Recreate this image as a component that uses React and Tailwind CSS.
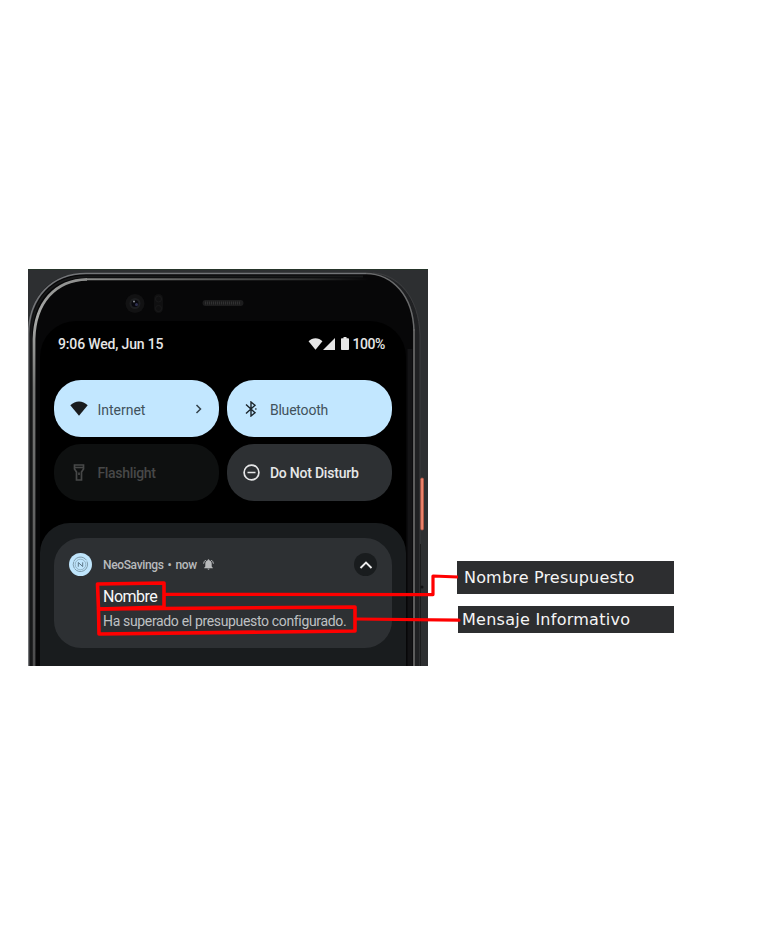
import React from "react";

function PhoneFrame() {
  return (
    <svg className="absolute inset-0" width="400" height="397" viewBox="0 0 400 397" fill="none">
      <defs>
        <linearGradient id="edge" x1="0" y1="0" x2="1" y2="0">
          <stop offset="0" stopColor="#8d8e8c" />
          <stop offset="0.4" stopColor="#595a59" />
          <stop offset="0.8" stopColor="#2c2d2d" />
          <stop offset="1" stopColor="#080809" />
        </linearGradient>
        <linearGradient id="leftEdge" x1="0" y1="0" x2="0" y2="397" gradientUnits="userSpaceOnUse">
          <stop offset="0" stopColor="#888988" />
          <stop offset="0.12" stopColor="#a8a9a7" />
          <stop offset="0.3" stopColor="#777877" />
          <stop offset="1" stopColor="#4c4c4d" />
        </linearGradient>
      </defs>
      <rect width="400" height="397" fill="#2d2f31" />
      <path d="M0 0.500H400" stroke="#26352a" strokeWidth="1" />
      <path d="M0 397V62C2 26 22 4 58 4H338C370 5 391 28 392 66V397Z" fill="#202123" />
      <path d="M2 397V65C3 28 24 5 60 5H338C366 5 385 27 386 62V397Z" fill="#070708" />
      <path d="M392 397V66C391 28 370 5 345 4" stroke="#3b3c3e" strokeWidth="1" />
      <path d="M0.500 397V65C1 28 24 4.500 58 4.500H338" stroke="#737578" strokeWidth="1.500" />
      <path d="M338 4.500C365 5 385 27 386 62" stroke="#696a6b" strokeWidth="1.500" />
      <path d="M3 397V67C4 30 25 7 60 7.500H335" stroke="#171819" strokeWidth="2" />
      <path d="M6 397V70C7 34 27 11 59 10.300" stroke="url(#leftEdge)" strokeWidth="2.800" />
      <path d="M58 9.200H340V11.200H58Z" fill="url(#edge)" />
      <path d="M386 60V397" stroke="#656565" strokeWidth="1.800" />
      <path d="M382 80V397" stroke="#131315" strokeWidth="5" />
      <rect x="392.700" y="209" width="2.800" height="52" rx="1.300" fill="#ec846d" stroke="#b75542" strokeWidth="0.700" />
      <circle cx="107" cy="34.500" r="9.500" fill="#121213" />
      <circle cx="107" cy="34.500" r="5.500" fill="#1d1e20" />
      <circle cx="107" cy="34.500" r="3.500" fill="#08080e" />
      <circle cx="106" cy="32.500" r="1" fill="#8b8f96" />
      <circle cx="108.500" cy="35.500" r="1.500" fill="#2f3152" />
      <rect x="126" y="25" width="9" height="19" rx="4.500" fill="#101011" />
      <circle cx="130.500" cy="30" r="3" stroke="#19191a" />
      <circle cx="130.500" cy="39.500" r="3" stroke="#19191a" />
      <rect x="174.500" y="31" width="41" height="6" rx="3" fill="#1c1c1d" />
      <path d="M177 34H213" stroke="#303031" strokeWidth="3" strokeDasharray="1 1" />
      <path d="M392.500 275V397" stroke="#1b1c1d" />
      <circle cx="394" cy="318" r="1.500" fill="#121214" />
    </svg>
  );
}

function WifiIcon({ className }) {
  return (
    <svg className={className} viewBox="0 0 18 15" fill="currentColor">
      <path d="M0.300 4.200C5.300-.9 12.700-.9 17.700 4.200L9 14.700Z" />
    </svg>
  );
}

function StatusBar() {
  return (
    <div className="flex h-[45px] items-center pl-[18px] pr-[21px] text-[14px] font-medium leading-none text-[#e6e6e6]">
      <span className="tracking-[-0.16px]">9:06 Wed, Jun 15</span>
      <WifiIcon className="ml-auto h-[12px] w-[15px]" />
      <svg className="h-[12px] w-[12px]" viewBox="0 0 12 12" fill="currentColor"><path d="M12 0V12H0Z" /></svg>
      <svg className="ml-[6px] h-[13px] w-[8px]" viewBox="0 0 8 13" fill="currentColor"><path d="M2.500 0H5.500V1.300H7.200Q8 1.300 8 2.100V12.200Q8 13 7.200 13H.8Q0 13 0 12.200V2.100Q0 1.300 .8 1.300H2.500Z" /></svg>
      <span className="ml-[3px] tracking-[-0.4px]">100%</span>
    </div>
  );
}

function Tile({ icon, label, tone, chevron }) {
  return (
    <div className={`flex h-[56.500px] items-center rounded-[27px] pl-[16px] pr-[16px] text-[14px] leading-none ${tone}`}>
      <span className="flex w-[18px] justify-center">{icon}</span>
      <span className="ml-[9px] pt-[2px]">{label}</span>
      {chevron && (
        <svg className="ml-auto h-[10px] w-[9px]" viewBox="0 0 9 10" fill="none" stroke="#334149" strokeWidth="1.500"><path d="M2.500 1L6.500 5L2.500 9" /></svg>
      )}
    </div>
  );
}

function QuickSettings() {
  return (
    <div className="ml-[14.400px] mt-[14.400px] grid grid-cols-[165px_165px] gap-x-[7.500px] gap-y-[7.200px]">
      <Tile tone="bg-[#c2e7ff] text-[#41525c] tracking-[0px]" label="Internet" chevron
        icon={<WifiIcon className="h-[15px] w-[18px] text-[#191c1e]" />} />
      <Tile tone="bg-[#c2e7ff] text-[#41525c] tracking-[-0.2px]" label="Bluetooth"
        icon={<svg className="mr-[2px] h-[16px] w-[12px]" viewBox="0 0 12 16" fill="none" stroke="#1b252b" strokeWidth="1.400"><path d="M1 3.500L10 11.700L6 15V1L10 4.300L1 12.500" /><path d="M10.200 8H11.500" /></svg>} />
      <Tile tone="bg-[#0e1010] text-[#474848] font-medium tracking-[-0.3px]" label="Flashlight"
        icon={<svg className="h-[17px] w-[12px]" viewBox="0 0 12 17" fill="none" stroke="#474848" strokeWidth="1.700"><path d="M1.500 1H10.500V5L8.500 8V16H3.500V8L1.500 5Z" /><path d="M1.500 3.500H10.500" /><path d="M6 8.500V11" /></svg>} />
      <Tile tone="bg-[#2d3033] text-[#e6e7e8] font-medium tracking-[-0.220px]" label="Do Not Disturb"
        icon={<svg className="mr-[1px] h-[17px] w-[17px]" viewBox="0 0 17 17" fill="none" stroke="currentColor" strokeWidth="1.700"><circle cx="8.500" cy="8.500" r="7.400" /><path d="M4.500 8.500H12.500" /></svg>} />
    </div>
  );
}

function AppLogo() {
  return (
    <svg className="h-[23px] w-[23px]" viewBox="0 0 23 23" fill="none">
      <circle cx="11.500" cy="11.500" r="11.500" fill="#bfe5fc" />
      <g stroke="#7793a3" strokeWidth="0.900">
        <path d="M5 8A7.300 7.300 0 0 1 17.500 7.300M18 8.500A7.200 7.200 0 0 1 5.500 15.500M4.800 8.500A7.200 7.200 0 0 0 5.200 15" />
        <circle cx="11.500" cy="11.500" r="5.300" strokeWidth="0.600" />
        <path d="M9.300 13.700V9.500L13.700 13.500V9.300" stroke="#526c7c" />
      </g>
    </svg>
  );
}

function RingingBell() {
  return (
    <svg className="h-[11px] w-[11px]" viewBox="0 0 11 11" fill="#b8babc">
      <path d="M5.500 .3C6 .3 6.300 .7 6.300 1.200C8 1.700 8.700 3 8.700 4.600V7.500L9.800 8.700V9.200H1.200V8.700L2.300 7.500V4.600C2.300 3 3 1.700 4.700 1.200C4.700 .7 5 .3 5.500 .3ZM4.400 9.800H6.600Q5.500 11.500 4.400 9.800Z" />
      <path d="M2.800 1Q.8 2.300 .6 4.700M8.200 1Q10.200 2.300 10.400 4.700" fill="none" stroke="#b8babc" strokeWidth="1" />
    </svg>
  );
}

function Notification() {
  return (
    <div className="mt-[22px] h-[144px] rounded-t-[30px] bg-[#191c1e] px-[14px] pt-[15.500px]">
      <div className="ml-[0.400px] h-[110px] rounded-[27px] bg-[#2d3033] pl-[14.600px] pr-[15px] pt-[15px]">
        <div className="flex h-[23px] items-center text-[12px] leading-none text-[#b8babc]">
          <AppLogo />
          <span className="ml-[11px] flex pt-[1px] font-medium tracking-[-0.350px]"><span>NeoSavings</span><span className="ml-[4px] mr-[4px]">•</span><span>now</span></span>
          <span className="ml-[6px]"><RingingBell /></span>
          <span className="ml-auto flex h-[23px] w-[23px] items-center justify-center rounded-full bg-[#191c1e]">
            <svg className="h-[8px] w-[14px]" viewBox="0 0 14 8" fill="none" stroke="#eeeeee" strokeWidth="1.900"><path d="M1.500 7L7 1.500L12.500 7" /></svg>
          </span>
        </div>
        <div className="ml-[34px] mt-[11.500px] text-[16px] leading-[18px] tracking-[-0.5px] text-[#f8f9fa]">Nombre</div>
        <div className="ml-[34px] mt-[6.500px] whitespace-nowrap text-[14px] leading-[18px] tracking-[-0.340px] text-[#bfc1c3]">Ha superado el presupuesto configurado.</div>
      </div>
    </div>
  );
}

function Phone() {
  return (
    <div className="relative h-[397px] w-[400px] overflow-hidden pl-[12px] pt-[52px]">
      <PhoneFrame />
      <div className="relative h-[345px] w-[366px] overflow-hidden rounded-t-[36px] bg-black">
        <StatusBar />
        <QuickSettings />
        <Notification />
      </div>
    </div>
  );
}

function Annotations() {
  return (
    <svg className="absolute left-0 top-0" width="780" height="928" viewBox="0 0 780 928" fill="none" stroke="#ff0000" strokeWidth="3.200" strokeLinecap="round" strokeLinejoin="round">
      <path d="M97.500 584L164 583V607L98.500 609Z" strokeWidth="3.600" />
      <path d="M98.500 609L355 607V631L99 634Z" strokeWidth="3.600" />
      <path d="M164 594.300L433 594.600V576L458 577" strokeLinecap="butt" />
      <path d="M356 619L459 620.200" />
    </svg>
  );
}

export default function App() {
  return (
    <main className="relative flex h-[928px] w-[780px] items-start bg-white pl-[28px] pt-[269px] font-['Roboto',sans-serif]">
      <Phone />
      <div className="ml-[29px] mt-[292px] flex w-[217px] flex-col gap-[12px] font-['DejaVu_Sans',sans-serif] text-[16px] leading-none text-[#f5f5f5]">
        <div className="flex h-[33px] items-center whitespace-nowrap bg-[#2d2e30] pl-[7px]"><span className="tracking-[0.180px]">Nombre Presupuesto</span></div>
        <div className="ml-px flex h-[27px] items-center whitespace-nowrap bg-[#2d2e30] pl-[4px]"><span className="tracking-[0.260px]">Mensaje Informativo</span></div>
      </div>
      <Annotations />
    </main>
  );
}
